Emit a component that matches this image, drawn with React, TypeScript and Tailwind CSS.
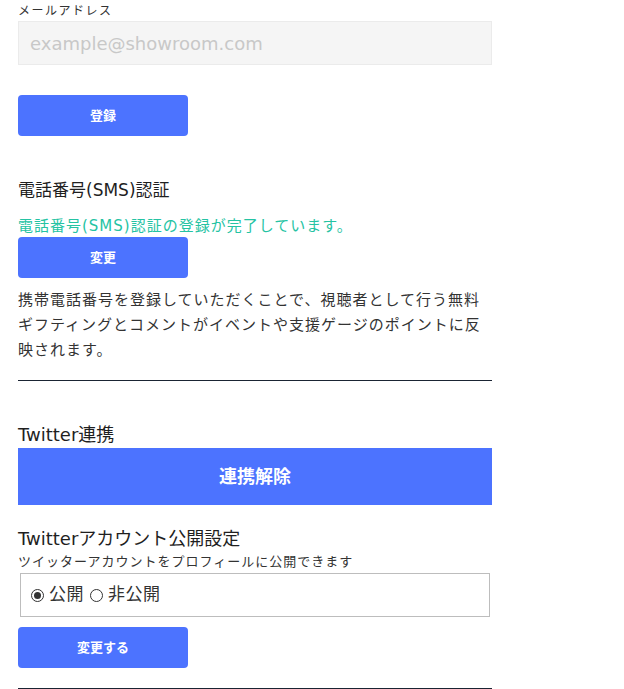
import React from 'react';

const font = { fontFamily: '"DejaVu Sans", "Noto Sans CJK JP", sans-serif' };

function BlueButton({ label }: { label: string }) {
    return (
        <button className="w-[170px] h-[41px] rounded-[4px] bg-[#4c73ff] text-white text-[13px] font-bold">
            {label}
        </button>
    );
}

function Radio({ checked, label }: { checked?: boolean; label: string }) {
    return (
        <label className="flex items-center gap-[5px]">
            <span className="w-[13px] h-[13px] rounded-full border border-[#333] flex items-center justify-center">
                {checked && <span className="w-[7px] h-[7px] rounded-full bg-[#333]" />}
            </span>
            {label}
        </label>
    );
}

export default function App() {
    return (
        <div className="bg-white min-h-[689px] text-[#333]" style={font}>
            <div className="w-[474px] ml-[18px]">
                {/* Email */}
                <p className="text-[12px] leading-[20px] pt-[1px] tracking-[1.5px]">メールアドレス</p>
                <input
                    type="text"
                    placeholder="example@showroom.com"
                    className="block w-full h-[44px] px-[11px] bg-[#f5f5f5] border border-[#ebebeb] text-[18px] placeholder:text-[#c8c8c8] outline-none"
                />
                <div className="mt-[30px]">
                    <BlueButton label="登録" />
                </div>

                {/* SMS */}
                <h2 className="mt-[40px] text-[17px] leading-[28px] text-[#1f1f1f]">電話番号(SMS)認証</h2>
                <p className="mt-[11px] text-[15px] leading-[22px] tracking-[1px] text-[#25c3a3]">
                    電話番号(SMS)認証の登録が完了しています。
                </p>
                <BlueButton label="変更" />
                <p className="mt-[10px] text-[15px] leading-[25px] tracking-[1px]">
                    携帯電話番号を登録していただくことで、視聴者として行う無料ギフティングとコメントがイベントや支援ゲージのポイントに反映されます。
                </p>
                <hr className="mt-[17px] border-t border-[#1a2433]" />

                {/* Twitter */}
                <h2 className="mt-[42px] text-[18px] leading-[24px] text-[#1f1f1f]">Twitter連携</h2>
                <button className="mt-[1px] block w-full h-[57px] bg-[#4c73ff] text-white text-[18px] font-bold">
                    連携解除
                </button>
                <h2 className="mt-[22px] text-[18px] leading-[24px] text-[#1f1f1f]">Twitterアカウント公開設定</h2>
                <p className="mt-[3px] text-[13px] leading-[16px] tracking-[1px]">ツイッターアカウントをプロフィールに公開できます</p>
                <div className="mt-[3px] ml-[2px] mr-[2px] h-[44px] border border-[#bdbdbd] flex items-center gap-[6px] pl-[10px] text-[17px] tracking-[0.5px]">
                    <Radio checked label="公開" />
                    <Radio label="非公開" />
                </div>
                <div className="mt-[10px]">
                    <BlueButton label="変更する" />
                </div>
                <hr className="mt-[20px] border-t border-[#1a2433]" />
            </div>
        </div>
    );
}
